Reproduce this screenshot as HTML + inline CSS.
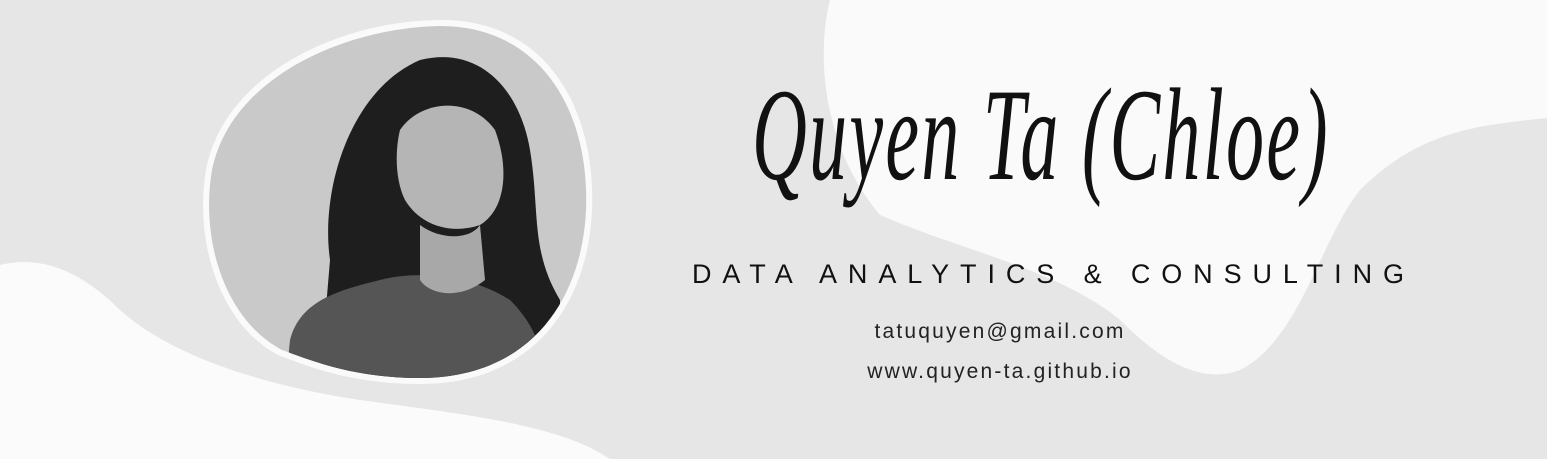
<!DOCTYPE html>
<html><head><meta charset="utf-8"><style>
html,body{margin:0;padding:0}
body{width:1547px;height:459px;overflow:hidden;background:#e6e6e6;position:relative;font-family:"Liberation Sans",sans-serif}
svg{position:absolute;left:0;top:0}
.name{position:absolute;left:752px;top:58px;font-family:"Liberation Serif",serif;font-style:italic;font-size:132px;color:#111;letter-spacing:4px;white-space:nowrap;transform:scaleX(0.575);transform-origin:left top}
.sub{position:absolute;left:692px;top:259px;font-size:27px;letter-spacing:10.9px;color:#111;white-space:nowrap}
.c{position:absolute;left:800px;width:400px;text-align:center;font-size:21px;color:#222;letter-spacing:2.2px}
</style></head><body>
<svg width="1547" height="459" viewBox="0 0 1547 459">
<defs><clipPath id="ph"><path d="M212 170 C230 80 340 28 440 26 C540 26 590 110 586 210 C582 300 530 378 420 378 C350 378 305 358 282 350 C225 320 200 240 212 170Z"/></clipPath></defs>
<path d="M0 265 C40 255 80 270 120 310 C170 355 260 385 360 400 C470 415 560 425 610 459 L0 459Z" fill="#fbfbfb"/>
<path d="M830 0 C815 60 825 150 880 215 C960 250 1060 270 1120 320 C1160 360 1200 385 1240 370 C1300 340 1320 240 1360 190 C1420 130 1480 125 1547 118 L1547 0Z" fill="#fafafa"/>
<path d="M206 170 C224 74 340 20 442 20 C546 20 596 108 592 210 C588 306 532 384 420 384 C348 384 302 364 278 355 C219 324 194 240 206 170Z" fill="#fafafa"/>
<g clip-path="url(#ph)">
<rect x="190" y="10" width="420" height="390" fill="#c9c9c9"/>
<path d="M330 260 C320 190 350 90 420 60 C480 45 520 90 530 150 C540 210 530 250 560 300 L560 380 L320 380Z" fill="#1e1e1e"/>
<path d="M400 130 C420 100 470 95 495 130 C510 170 505 210 480 225 C450 235 420 225 405 200 C395 180 395 150 400 130Z" fill="#b5b5b5"/>
<path d="M290 340 C300 300 340 290 380 280 C420 270 470 275 510 300 C540 330 545 360 545 390 L285 390Z" fill="#555"/>
<path d="M420 225 C440 240 470 240 480 225 L485 280 C460 300 430 295 420 280Z" fill="#a8a8a8"/>
</g>
</svg>
<div class="name">Quyen Ta (Chloe)</div>
<div class="sub">DATA ANALYTICS &amp; CONSULTING</div>
<div class="c" style="top:320px">tatuquyen@gmail.com</div>
<div class="c" style="top:360px">www.quyen-ta.github.io</div>
</body></html>
